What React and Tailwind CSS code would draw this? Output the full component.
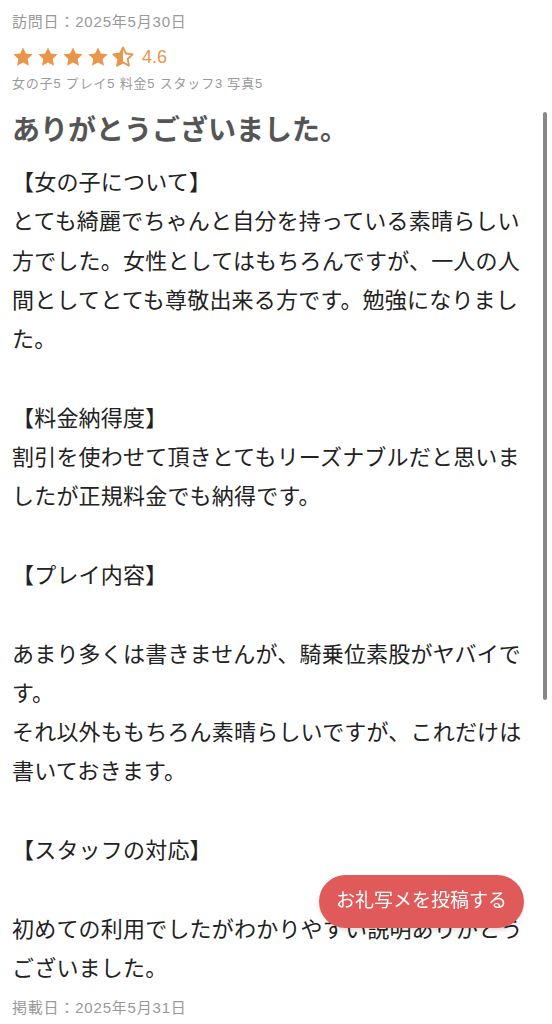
import React from 'react'

const FONT = { fontFamily: '"Liberation Sans", "Noto Sans CJK JP", sans-serif' }

const BODY = `【女の子について】
とても綺麗でちゃんと自分を持っている素晴らしい方でした。女性としてはもちろんですが、一人の人間としてとても尊敬出来る方です。勉強になりました。

【料金納得度】
割引を使わせて頂きとてもリーズナブルだと思いましたが正規料金でも納得です。

【プレイ内容】

あまり多くは書きませんが、騎乗位素股がヤバイです。
それ以外ももちろん素晴らしいですが、これだけは書いておきます。

【スタッフの対応】

初めての利用でしたがわかりやすい説明ありがとうございました。`

function Star({ half }) {
  const d = 'M12 1.5l3.2 6.7 7.3.9-5.4 5.1 1.4 7.3L12 17.9l-6.5 3.6 1.4-7.3-5.4-5.1 7.3-.9z'
  if (half) {
    return (
      <svg viewBox="0 0 24 24" className="w-[22px] h-[22px]">
        <defs>
          <clipPath id="lefthalf">
            <rect x="0" y="0" width="12" height="24" />
          </clipPath>
        </defs>
        <path d={d} fill="#e8964b" clipPath="url(#lefthalf)" />
        <path d={d} fill="none" stroke="#e8964b" strokeWidth="2" strokeLinejoin="round" />
      </svg>
    )
  }
  return (
    <svg viewBox="0 0 24 24" className="w-[22px] h-[22px]">
      <path d={d} fill="#e8964b" />
    </svg>
  )
}

export default function App() {
  return (
    <div className="relative min-h-[1024px] bg-white" style={FONT}>
      <div className="pl-3 pr-5 pt-3">
        {/* Header */}
        <p className="text-[15px] leading-[20px] tracking-[0.8px] text-[#999]">訪問日：2025年5月30日</p>
        <div className="flex items-center mt-[13px] h-6">
          <div className="flex items-center gap-[3px]">
            <Star />
            <Star />
            <Star />
            <Star />
            <Star half />
          </div>
          <span className="ml-[8px] text-[18px] text-[#e8964b]">4.6</span>
        </div>
        <p className="mt-1.5 text-[13px] leading-[18px] tracking-[0.8px] text-[#999]">
          女の子5 プレイ5 料金5 スタッフ3 写真5
        </p>

        {/* Review */}
        <h2 className="mt-5 text-[28px] leading-[36px] font-bold text-[#555]">
          ありがとうございました。
        </h2>
        <p className="mt-[14px] text-[22px] leading-[39.3px] text-[#222] whitespace-pre-wrap tracking-[0.2px]">
          {BODY}
        </p>
        <p className="mt-[10px] text-[15px] leading-[20px] tracking-[0.8px] text-[#999]">掲載日：2025年5月31日</p>
      </div>

      {/* Floating button */}
      <button className="fixed left-[319px] top-[875px] w-[205px] h-[53px] rounded-full bg-[#e05a5a] text-white text-[19px] shadow-md">
        お礼写メを投稿する
      </button>

      {/* Scroll indicator */}
      <div className="fixed left-[543px] top-[112px] w-[4px] h-[588px] rounded-full bg-[#888]" />
    </div>
  )
}
